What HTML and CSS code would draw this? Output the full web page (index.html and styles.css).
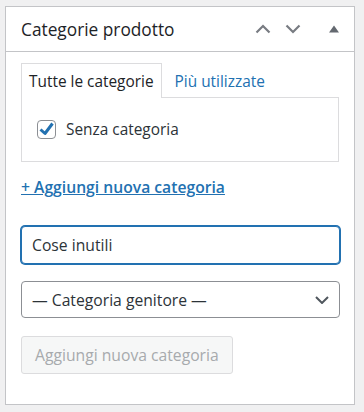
FILE: index.html
```html
<!DOCTYPE html>
<html lang="it">
<head>
<meta charset="utf-8">
<title>Categorie prodotto</title>
<link rel="stylesheet" href="styles.css">
</head>
<body>
<div class="postbox">
  <div class="postbox-header">
    <h2 class="hndle">Categorie prodotto</h2>
    <div class="handle-actions">
      <svg class="ico-up" width="16" height="10" viewBox="0 0 16 10"><polyline points="1.5,8.5 8,2 14.5,8.5" fill="none" stroke="#787c82" stroke-width="2.2"/></svg>
      <svg class="ico-down" width="16" height="10" viewBox="0 0 16 10"><polyline points="1.5,1.5 8,8 14.5,1.5" fill="none" stroke="#787c82" stroke-width="2.2"/></svg>
      <svg class="ico-toggle" width="10" height="8" viewBox="0 0 10 8"><polygon points="0,7.5 5,0.5 10,7.5" fill="#646970"/></svg>
    </div>
  </div>
  <div class="inside">
    <ul class="tabs">
      <li class="tab active">Tutte le categorie</li>
      <li class="tab">Più utilizzate</li>
    </ul>
    <div class="tabs-panel">
      <label class="cat-item">
        <span class="checkbox">
          <svg width="19" height="19" viewBox="0 0 19 19"><polyline points="3.5,9.5 8,13.5 15.5,3.5" fill="none" stroke="#2271b1" stroke-width="3" stroke-linejoin="round"/></svg>
        </span>
        Senza categoria
      </label>
    </div>
    <a class="add-toggle" href="#">+ Aggiungi nuova categoria</a>
    <input class="new-cat" type="text" value="Cose inutili">
    <div class="select-wrap">
      <select class="parent-cat">
        <option>— Categoria genitore —</option>
      </select>
      <svg class="select-arrow" width="14" height="8" viewBox="0 0 14 8"><polyline points="1,1 7,7 13,1" fill="none" stroke="#50575e" stroke-width="2"/></svg>
    </div>
    <button class="add-btn" type="button" disabled>Aggiungi nuova categoria</button>
  </div>
</div>
</body>
</html>
```

FILE: styles.css
```css
* { box-sizing: border-box; }
html, body { margin: 0; padding: 0; }
body {
  background: #f0f0f1;
  font-family: "Open Sans", "Noto Sans", sans-serif;
  color: #1d2327;
  padding: 6px 0 0 5px;
}
.postbox {
  width: 350px;
  height: 399px;
  background: #fff;
  border: 1px solid #c3c4c7;
}
.postbox-header {
  height: 45px;
  border-bottom: 1px solid #c3c4c7;
  display: flex;
  align-items: center;
  padding: 0 14px 0 15px;
}
.hndle {
  margin: 0;
  font-size: 17.3px;
  font-weight: 400;
  color: #1d2327;
}
.handle-actions {
  margin-left: auto;
  display: flex;
  align-items: center;
}
.ico-up { margin-right: 14px; }
.ico-down { margin-right: 28px; }
.ico-toggle { margin-right: 1px; }
.inside {
  padding: 11px 14px 0 15px;
  display: flex;
  flex-direction: column;
  align-items: flex-start;
}
.tabs {
  list-style: none;
  margin: 0 0 -1px;
  padding: 0;
  display: flex;
  font-size: 15.4px;
}
.tab {
  height: 35px;
  display: flex;
  align-items: center;
  padding: 0 7px;
  border: 1px solid transparent;
  border-bottom: none;
  color: #2271b1;
}
.tab.active {
  color: #1d2327;
  background: #fff;
  border-color: #dcdcde;
  position: relative;
  z-index: 1;
}
.tab + .tab { margin-left: 5px; }
.tabs-panel {
  width: 318px;
  height: 65px;
  border: 1px solid #dcdcde;
  display: flex;
  align-items: center;
  padding-left: 15px;
}
.cat-item {
  display: flex;
  align-items: center;
  font-size: 15.4px;
  color: #2c3338;
}
.checkbox {
  width: 19px;
  height: 19px;
  border: 1px solid #8c8f94;
  border-radius: 4px;
  margin-right: 10px;
  display: flex;
}
.checkbox svg { margin: -1px; }
.add-toggle {
  margin-top: 14px;
  font-size: 15.7px;
  line-height: 22px;
  font-weight: 600;
  color: #2271b1;
  text-decoration: underline;
}
.new-cat {
  margin: 28px 0 0;
  width: 319px;
  height: 38px;
  border: 1px solid #2271b1;
  box-shadow: 0 0 0 1px #2271b1;
  border-radius: 4px;
  padding: 0 10px;
  font: inherit;
  font-size: 15.7px;
  color: #2c3338;
  outline: none;
}
.select-wrap {
  margin-top: 17px;
  position: relative;
  width: 319px;
}
.parent-cat {
  display: block;
  width: 319px;
  height: 37px;
  border: 1px solid #8c8f94;
  border-radius: 4px;
  padding: 0 30px 0 10px;
  font: inherit;
  font-size: 15.7px;
  color: #2c3338;
  background: #fff;
  appearance: none;
  -webkit-appearance: none;
}
.select-arrow {
  position: absolute;
  right: 11px;
  top: 15px;
}
.add-btn {
  margin-top: 18px;
  height: 38px;
  padding: 0 13px;
  border: 1px solid #dcdcde;
  border-radius: 3px;
  background: #f6f7f7;
  color: #a7aaad;
  font: inherit;
  font-size: 15.7px;
}
```
